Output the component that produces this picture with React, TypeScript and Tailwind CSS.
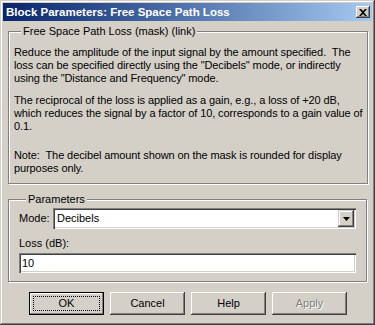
import React from 'react';

const font = { fontFamily: '"Liberation Sans", Arial, sans-serif' };

function CloseIcon() {
  return (
    <svg width="8" height="7" viewBox="0 0 8 7" className="block">
      <path d="M0 0h2l2 2 2-2h2L5 3.5 8 7H6L4 5 2 7H0l3-3.5z" fill="#000" />
    </svg>
  );
}

function DownArrow() {
  return (
    <svg width="7" height="4" viewBox="0 0 7 4" className="block">
      <path d="M0 0h7L3.5 4z" fill="#000" />
    </svg>
  );
}

function PushButton({ label, isDefault, disabled }: { label: string; isDefault?: boolean; disabled?: boolean }) {
  if (isDefault) {
    return (
      <button className="flex w-[75px] h-[23px] border border-black bg-[#d4d0c8] p-[3px] shadow-[inset_-1px_-1px_#808080,inset_1px_1px_#ffffff]">
        <span className="flex flex-1 items-center justify-center border border-dotted border-black text-black">
          {label}
        </span>
      </button>
    );
  }
  return (
    <button
      className={
        'flex w-[75px] h-[23px] items-center justify-center bg-[#d4d0c8] shadow-[inset_-1px_-1px_#404040,inset_1px_1px_#ffffff,inset_-2px_-2px_#808080] ' +
        (disabled ? 'text-[#808080] [text-shadow:1px_1px_0_#ffffff]' : 'text-black')
      }
    >
      {label}
    </button>
  );
}

export default function App() {
  return (
    <div
      style={font}
      className="w-[375px] h-[325px] bg-[#d4d0c8] p-[3px] flex flex-col text-[11px] leading-[13px] text-black shadow-[inset_-1px_-1px_#404040,inset_1px_1px_#d4d0c8,inset_-2px_-2px_#808080,inset_2px_2px_#ffffff]"
    >
      {/* title bar */}
      <div className="h-[18px] shrink-0 flex items-center justify-between pl-[3px] pr-[2px] bg-gradient-to-r from-[#0a246a] to-[#a6caf0]">
        <span className="text-white font-bold text-[11.5px]">Block Parameters: Free Space Path Loss</span>
        <span className="flex items-center justify-center w-[14px] h-[12px] bg-[#d4d0c8] shadow-[inset_-1px_-1px_#404040,inset_1px_1px_#ffffff,inset_-2px_-2px_#808080]">
          <CloseIcon />
        </span>
      </div>

      <fieldset className="mt-[4px] ml-[5px] w-[359px] border border-[#808080] px-[5px] pt-[8px] pb-[8px] whitespace-nowrap tracking-[-0.1px] shadow-[1px_1px_#ffffff,inset_1px_1px_#ffffff]">
        <legend className="ml-[7px] px-[2px] bg-[#d4d0c8] tracking-normal">Free Space Path Loss (mask) (link)</legend>
        <p>
          Reduce the amplitude of the input signal by the amount specified.&nbsp; The
          <br />
          loss can be specified directly using the "Decibels" mode, or indirectly
          <br />
          using the "Distance and Frequency" mode.
        </p>
        <p className="mt-[9px]">
          The reciprocal of the loss is applied as a gain, e.g., a loss of +20 dB,
          <br />
          which reduces the signal by a factor of 10, corresponds to a gain value of
          <br />
          0.1.
        </p>
        <p className="mt-[16px]">
          Note:&nbsp; The decibel amount shown on the mask is rounded for display
          <br />
          purposes only.
        </p>
      </fieldset>

      <fieldset className="mt-[9px] ml-[5px] w-[359px] border border-[#808080] pl-[10px] pr-[10px] pt-[2px] pb-[8px] shadow-[1px_1px_#ffffff,inset_1px_1px_#ffffff]">
        <legend className="ml-[7px] px-[2px] bg-[#d4d0c8]">Parameters</legend>
        <div className="flex items-center">
          <span className="w-[34px]">Mode:</span>
          <div className="flex flex-1 h-[21px] items-center bg-white pl-[4px] pr-[2px] shadow-[inset_1px_1px_#808080,inset_2px_2px_#404040,inset_-1px_-1px_#ffffff,inset_-2px_-2px_#d4d0c8]">
            <span className="flex-1">Decibels</span>
            <span className="flex items-center justify-center w-[16px] h-[17px] bg-[#d4d0c8] shadow-[inset_-1px_-1px_#404040,inset_1px_1px_#d4d0c8,inset_-2px_-2px_#808080,inset_2px_2px_#ffffff]">
              <DownArrow />
            </span>
          </div>
        </div>
        <div className="mt-[8px]">Loss (dB):</div>
        <div className="mt-[3px] h-[20px] flex items-center bg-white pl-[3px] shadow-[inset_1px_1px_#808080,inset_2px_2px_#404040,inset_-1px_-1px_#ffffff,inset_-2px_-2px_#d4d0c8]">
          10
        </div>
      </fieldset>

      <div className="mt-[10px] flex gap-[6px] pl-[26px]">
        <PushButton label="OK" isDefault />
        <PushButton label="Cancel" />
        <PushButton label="Help" />
        <PushButton label="Apply" disabled />
      </div>
    </div>
  );
}
